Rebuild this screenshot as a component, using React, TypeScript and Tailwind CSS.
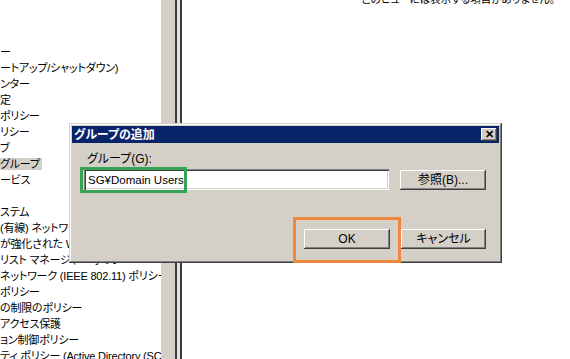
import React from "react";

const treeLines: { text: string; sel?: boolean }[] = [
  { text: "ー" },
  { text: "ートアップ/シャットダウン)" },
  { text: "ンター" },
  { text: "定" },
  { text: "ポリシー" },
  { text: "リシー" },
  { text: "ブ" },
  { text: "グループ", sel: true },
  { text: "ービス" },
  { text: "" },
  { text: "ステム" },
  { text: "(有線) ネットワーク (IEEE 802.3) ポリシー" },
  { text: "が強化された Windows ファイアウォール" },
  { text: "リスト マネージャー ポリシー" },
  { text: "ネットワーク (IEEE 802.11) ポリシー" },
  { text: "ポリシー" },
  { text: "の制限のポリシー" },
  { text: "アクセス保護" },
  { text: "ョン制御ポリシー" },
  { text: "ティ ポリシー (Active Directory (SCW)" },
];

const btn =
  "flex items-center justify-center bg-[#d4d0c8] text-black shadow-[inset_-1px_-1px_0_#404040,inset_1px_1px_0_#ffffff,inset_-2px_-2px_0_#808080,inset_2px_2px_0_#d4d0c8]";

const App = () => {
  return (
    <div className="relative w-[570px] h-[359px] overflow-hidden bg-white text-[12px] leading-[16px] text-black font-['Liberation_Sans','Noto_Sans_CJK_JP',sans-serif] [font-feature-settings:'palt']">
      <div className="flex h-full">
        {/* left tree pane */}
        <div className="w-[161px] shrink-0 overflow-hidden pt-[44px] whitespace-nowrap text-[11px] tracking-[-0.2px]">
          {treeLines.map((l, i) => (
            <div key={i} className="h-[16px]">
              <span className={l.sel ? "bg-[#d4d0c8] pr-[2px]" : ""}>{l.text}</span>
            </div>
          ))}
        </div>
        {/* splitter */}
        <div className="w-[14px] shrink-0 bg-[#d4d0c8]" />
        <div className="w-[2px] shrink-0 bg-[#3c3c3c]" />
        <div className="w-[3px] shrink-0 bg-[#e4e2dc]" />
        <div className="w-[2px] shrink-0 bg-[#3c3c3c]" />
        {/* right pane */}
        <div className="flex-1 overflow-hidden">
          <div className="-mt-[9px] pr-[15px] text-right text-[10.5px] whitespace-nowrap">
            このビューには表示する項目がありません。
          </div>
        </div>
      </div>

      {/* dialog window */}
      <div className="absolute left-[69px] top-[123px] w-[433px] h-[140px] bg-[#d4d0c8] p-[3px] shadow-[inset_-1px_-1px_0_#404040,inset_1px_1px_0_#d4d0c8,inset_-2px_-2px_0_#808080,inset_2px_2px_0_#ffffff]">
        <div className="flex h-[17px] items-center justify-between bg-[#0a246a] pl-[2px] pr-[2px]">
          <span className="font-bold text-white text-[12px]">グループの追加</span>
          <div className={btn + " w-[16px] h-[13px] text-[11px] font-bold leading-none"}>✕</div>
        </div>
        <div className="pl-[12px] pr-[13px] pt-[9px]">
          <div className="h-[14px] leading-[14px] pl-[3px]">グループ(G):</div>
          <div className="mt-[3px] flex items-center gap-[11px]">
            <div className="w-[305px] h-[21px] bg-white pl-[4px] flex items-center text-[11.5px] shadow-[inset_1px_1px_0_#808080,inset_2px_2px_0_#404040,inset_-1px_-1px_0_#ffffff,inset_-2px_-2px_0_#d4d0c8]">
              SG¥Domain Users
            </div>
            <div className={btn + " w-[86px] h-[20px]"}>参照(B)...</div>
          </div>
          <div className="mt-[39px] flex justify-end gap-[11px]">
            <div className={btn + " w-[86px] h-[20px]"}>OK</div>
            <div className={btn + " w-[85px] h-[20px]"}>キャンセル</div>
          </div>
        </div>
        {/* annotation boxes */}
        <div className="absolute left-[11px] top-[44px] w-[107px] h-[26px] border-[3px] border-[#35a555]" />
        <div className="absolute left-[224px] top-[94px] w-[108px] h-[46px] border-[3px] border-[#f0893b]" />
      </div>
    </div>
  );
};

export default App;
